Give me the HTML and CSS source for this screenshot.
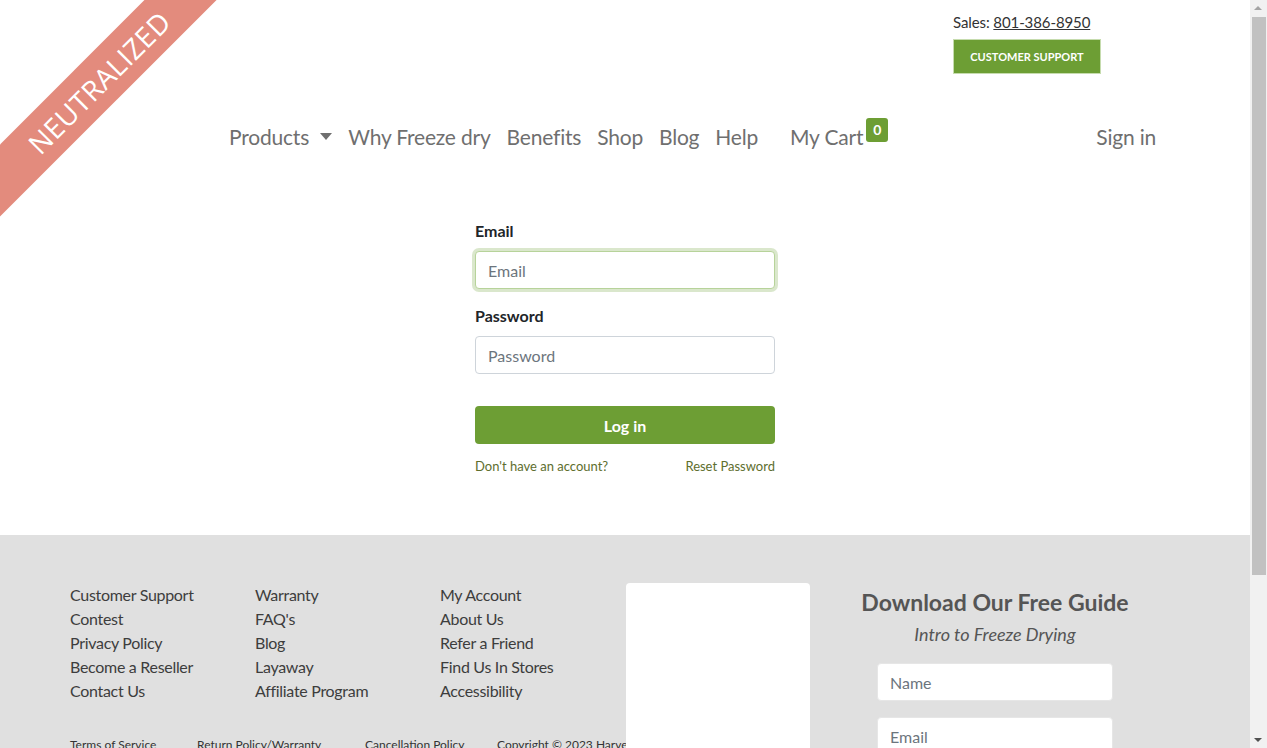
FILE: index.html
```html
<!DOCTYPE html>
<html lang="en">
<head>
<meta charset="utf-8">
<title>Sign in</title>
<link rel="stylesheet" href="styles.css">
</head>
<body>
<div class="ribbon"><span>NEUTRALIZED</span></div>
<div class="scrollbar" aria-hidden="true">
  <span class="arrow up"></span>
  <span class="thumb"></span>
  <span class="arrow down"></span>
</div>
<header class="header">
  <div class="topbar">
    <div class="contact">
      <div class="sales">Sales: <a href="#">801-386-8950</a></div>
      <a class="support-btn" href="#">CUSTOMER SUPPORT</a>
    </div>
  </div>
  <nav class="nav">
    <ul class="menu">
      <li><a href="#">Products <span class="caret"></span></a></li>
      <li><a href="#">Why Freeze dry</a></li>
      <li><a href="#">Benefits</a></li>
      <li><a href="#">Shop</a></li>
      <li><a href="#">Blog</a></li>
      <li><a href="#">Help</a></li>
      <li class="cart"><a href="#">My Cart</a><span class="badge">0</span></li>
    </ul>
    <a class="signin" href="#">Sign in</a>
  </nav>
</header>

<main class="main">
  <form class="login">
    <label class="label">Email</label>
    <input class="input focus" type="text" placeholder="Email">
    <label class="label">Password</label>
    <input class="input last" type="password" placeholder="Password">
    <button class="login-btn" type="button">Log in</button>
    <div class="login-links">
      <a href="#">Don't have an account?</a>
      <a href="#">Reset Password</a>
    </div>
  </form>
</main>

<footer class="footer">
  <div class="footer-inner">
    <div class="links-area">
      <div class="link-cols">
        <ul>
          <li><a href="#">Customer Support</a></li>
          <li><a href="#">Contest</a></li>
          <li><a href="#">Privacy Policy</a></li>
          <li><a href="#">Become a Reseller</a></li>
          <li><a href="#">Contact Us</a></li>
        </ul>
        <ul>
          <li><a href="#">Warranty</a></li>
          <li><a href="#">FAQ's</a></li>
          <li><a href="#">Blog</a></li>
          <li><a href="#">Layaway</a></li>
          <li><a href="#">Affiliate Program</a></li>
        </ul>
        <ul>
          <li><a href="#">My Account</a></li>
          <li><a href="#">About Us</a></li>
          <li><a href="#">Refer a Friend</a></li>
          <li><a href="#">Find Us In Stores</a></li>
          <li><a href="#">Accessibility</a></li>
        </ul>
      </div>
      <div class="legal">
        <a href="#">Terms of Service</a>
        <a href="#">Return Policy/Warranty</a>
        <a href="#">Cancellation Policy</a>
        <span>Copyright © 2023 Harvest Right</span>
      </div>
    </div>
    <div class="box-col"><div class="white-box"></div></div>
    <div class="guide">
      <h2>Download Our Free Guide</h2>
      <p class="sub">Intro to Freeze Drying</p>
      <input class="g-input" type="text" placeholder="Name">
      <input class="g-input" type="text" placeholder="Email">
      <button class="g-btn" type="button">Download</button>
    </div>
  </div>
</footer>
</body>
</html>
```
FILE: styles.css
```css
* { box-sizing: border-box; }
html, body { margin: 0; padding: 0; }
body {
  font-family: Lato, "Open Sans", "Liberation Sans", sans-serif;
  color: #212529;
  background: #fff;
  font-size: 16px;
  margin-right: 17px;
}
a { text-decoration: none; color: inherit; }
ul { list-style: none; margin: 0; padding: 0; }

.ribbon {
  position: absolute;
  left: -80px;
  top: 55px;
  width: 360px;
  height: 51px;
  background: #e38b7d;
  transform: rotate(-45deg);
  display: flex;
  align-items: center;
  justify-content: center;
  z-index: 5;
}
.ribbon span {
  font-family: "Open Sans", sans-serif;
  font-size: 28px;
  color: #fff;
  letter-spacing: 0.5px;
  transform: translateX(-2px);
}

.scrollbar {
  position: fixed;
  top: 0;
  right: 0;
  width: 17px;
  height: 100%;
  background: #f1f1f1;
  z-index: 10;
}
.scrollbar .thumb {
  position: absolute;
  left: 2px;
  right: 1px;
  top: 17px;
  height: 558px;
  background: #c1c1c1;
}
.scrollbar .arrow {
  position: absolute;
  left: 4px;
  width: 0; height: 0;
  border-left: 4px solid transparent;
  border-right: 4px solid transparent;
}
.scrollbar .up { top: 6px; border-bottom: 4px solid #a3a3a3; }
.scrollbar .down { bottom: 6px; border-top: 4px solid #505050; }

.header { width: 1110px; margin: 0 auto; }
.topbar { display: flex; justify-content: flex-end; padding-top: 12px; padding-right: 79px; }
.contact { width: 148px; }
.sales { font-size: 15px; color: #333; line-height: 20px; white-space: nowrap; letter-spacing: -0.1px; }
.sales a { text-decoration: underline; color: #333; }
.support-btn {
  display: block;
  margin-top: 7px;
  height: 35px;
  line-height: 33px;
  background: #6d9e34;
  border: 1px solid #c6dcae;
  color: #fff;
  font-size: 11px;
  font-weight: 700;
  text-align: center;
}

.nav {
  display: flex;
  align-items: center;
  justify-content: space-between;
  margin-top: 42px;
  padding-left: 159px;
  padding-right: 24px;
  height: 40px;
}
.menu { display: flex; align-items: center; gap: 16px; }
.menu a, .signin { font-size: 21px; color: #6f6f6f; letter-spacing: -0.2px; }
.caret {
  display: inline-block;
  width: 0; height: 0;
  border-left: 6px solid transparent;
  border-right: 6px solid transparent;
  border-top: 7px solid #6f6f6f;
  vertical-align: middle;
  margin-left: 6px;
  position: relative;
  top: -3px;
}
.cart { margin-left: 16px; position: relative; }
.badge {
  position: absolute;
  right: -25px;
  top: -6px;
  background: #6d9e34;
  color: #fff;
  font-size: 14px;
  font-weight: 700;
  border-radius: 3px;
  width: 22px;
  height: 24px;
  line-height: 24px;
  text-align: center;
}

.main { display: flex; justify-content: center; padding: 65px 0 61px; }
.login { width: 300px; display: flex; flex-direction: column; }
.label { font-weight: 700; font-size: 16px; line-height: 20px; color: #212529; margin-bottom: 10px; }
.input {
  width: 300px;
  height: 38px;
  border: 1px solid #ced4da;
  border-radius: 4px;
  padding: 0 12px;
  font: inherit;
  font-size: 16px;
  margin-bottom: 17px;
  color: #495057;
}
.input::placeholder { color: #6c757d; }
.input.focus {
  border-color: #b7d39a;
  box-shadow: 0 0 0 3px rgba(109, 158, 52, 0.25);
  outline: none;
}
.input.last { margin-bottom: 32px; }
.login-btn {
  height: 38px;
  background: #6d9e34;
  color: #fff;
  border: none;
  border-radius: 4px;
  font: inherit;
  font-size: 16px;
  font-weight: 700;
}
.login-links {
  display: flex;
  justify-content: space-between;
  margin-top: 14px;
  font-size: 13px;
  color: #5e6e2e;
}

.footer { background: #e0e0e0; padding-top: 48px; height: 420px; }
.footer-inner { width: 1110px; margin: 0 auto; display: flex; }
.links-area { width: 555px; }
.link-cols { display: grid; grid-template-columns: 185px 185px 185px; }
.link-cols li { line-height: 24px; font-size: 16px; color: #3d3d3d; letter-spacing: -0.3px; }
.legal {
  display: grid;
  grid-template-columns: 127px 168px 132px auto;
  margin-top: 34px;
  font-size: 12px;
  color: #333;
  white-space: nowrap;
}
.box-col { width: 185px; padding-left: 1px; }
.white-box { background: #fff; border-radius: 4px; width: 184px; height: 300px; }
.guide { width: 370px; display: flex; flex-direction: column; align-items: center; }
.guide h2 { margin: 6px 0 0; font-size: 23px; font-weight: 700; color: #555; line-height: 26px; }
.guide .sub { margin: 8px 0 18px; font-size: 18px; font-style: italic; color: #555; line-height: 22px; }
.g-input {
  width: 236px;
  height: 38px;
  border: 1px solid #e6e6e6;
  border-radius: 4px;
  padding: 0 12px;
  font: inherit;
  font-size: 16px;
  margin-bottom: 16px;
  background: #fff;
}
.g-input::placeholder { color: #6c757d; }
.g-btn {
  width: 236px; height: 38px; border: none; border-radius: 4px;
  background: #6d9e34; color: #fff; font: inherit; font-weight: 700;
}
```
